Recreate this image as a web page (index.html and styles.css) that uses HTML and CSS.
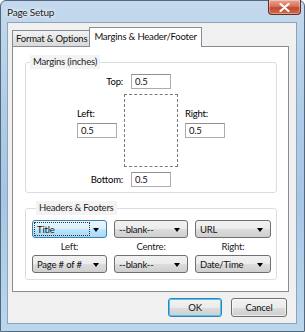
FILE: index.html
```html
<!DOCTYPE html>
<html lang="en">
<head>
    <meta charset="UTF-8">
    <title>Page Setup</title>
    <link rel="stylesheet" href="styles.css">
</head>
<body>
    <div class="window">
        <div class="titlebar">
            <span class="title">Page Setup</span>
            <button class="close" type="button">
                <svg width="11" height="9" viewBox="0 0 11 9"><path d="M1.5 1 L9.5 8 M9.5 1 L1.5 8" stroke="#fff" stroke-width="2.2" stroke-linecap="round"/></svg>
            </button>
        </div>
        <div class="client">
            <div class="tabs">
                <div class="tab">Format &amp; Options</div>
                <div class="tab active">Margins &amp; Header/Footer</div>
            </div>
            <div class="panel">
                <fieldset class="group margins">
                    <legend>Margins (inches)</legend>
                    <div class="edge-row">
                        <label class="edge-label">Top:</label>
                        <input class="field" type="text" value="0.5">
                    </div>
                    <div class="middle-row">
                        <div class="side">
                            <label>Left:</label>
                            <input class="field" type="text" value="0.5">
                        </div>
                        <div class="paper"></div>
                        <div class="side">
                            <label>Right:</label>
                            <input class="field" type="text" value="0.5">
                        </div>
                    </div>
                    <div class="edge-row">
                        <label class="edge-label">Bottom:</label>
                        <input class="field" type="text" value="0.5">
                    </div>
                </fieldset>

                <fieldset class="group headers">
                    <legend>Headers &amp; Footers</legend>
                    <div class="hf-grid">
                        <div class="combo focused"><span class="focus-rect">Title</span><i class="arrow"></i></div>
                        <div class="combo"><span>--blank--</span><i class="arrow"></i></div>
                        <div class="combo"><span>URL</span><i class="arrow"></i></div>
                        <div class="hf-label">Left:</div>
                        <div class="hf-label">Centre:</div>
                        <div class="hf-label">Right:</div>
                        <div class="combo"><span>Page # of #</span><i class="arrow"></i></div>
                        <div class="combo"><span>--blank--</span><i class="arrow"></i></div>
                        <div class="combo"><span>Date/Time</span><i class="arrow"></i></div>
                    </div>
                </fieldset>
            </div>
            <div class="actions">
                <button class="btn default" type="button">OK</button>
                <button class="btn" type="button">Cancel</button>
            </div>
        </div>
    </div>
</body>
</html>
```

FILE: styles.css
```css
* {
    box-sizing: border-box;
}

body {
    margin: 0;
    font-family: Lato, "Noto Sans", sans-serif;
    font-size: 9.5px;
    letter-spacing: -0.2px;
    color: #000;
}

.window {
    width: 305px;
    height: 332px;
    display: flex;
    flex-direction: column;
    padding: 0 7px 7px 6px;
    background: linear-gradient(180deg, #c4d9ed 0%, #b0cde8 30%, #a5c6e4 60%, #bad7ee 100%);
    border: 1px solid #54687d;
    border-radius: 6px 6px 0 0;
}

.titlebar {
    height: 21px;
    display: flex;
    align-items: center;
}

.title {
    font-size: 10px;
    color: #1a1a1a;
    text-shadow: 0 0 6px #fff, 0 0 3px #fff;
}

.close {
    margin-left: auto;
    margin-right: -4px;
    align-self: flex-start;
    margin-top: -1px;
    width: 33px;
    height: 15px;
    padding: 0;
    border: 1px solid #6b2a1e;
    border-top: none;
    border-radius: 0 0 4px 4px;
    background: linear-gradient(180deg, #e9a593 0%, #d7735c 45%, #c24a2e 55%, #d06a4c 100%);
    display: flex;
    align-items: center;
    justify-content: center;
    box-shadow: inset 0 0 0 1px rgba(255, 255, 255, 0.35);
}

.client {
    flex: 1;
    background: #f0f0f0;
    border: 1px solid #8fa3b8;
    display: flex;
    flex-direction: column;
}

.tabs {
    display: flex;
    align-items: flex-end;
    margin: 4px 0 0 4px;
    height: 19px;
    position: relative;
    z-index: 1;
}

.tab {
    height: 16px;
    padding: 0 2px 0 3px;
    line-height: 15px;
    border: 1px solid #898c95;
    border-bottom: none;
    border-right: none;
    background: linear-gradient(180deg, #f2f2f2 0%, #e6e6e6 50%, #d9d9d9 100%);
    color: #111;
}

.tab.active {
    height: 20px;
    margin-bottom: -1px;
    padding: 0 4px;
    line-height: 17px;
    background: #fff;
    border-right: 1px solid #898c95;
}

.panel {
    margin: 0 7px 0 4px;
    height: 246px;
    background: #fff;
    border: 1px solid #898c95;
    padding: 8px 11px 0 12px;
}

.group {
    margin: 0;
    border: 1px solid #d5dfe5;
    border-radius: 3px;
    padding: 0;
    min-width: 0;
}

.group legend {
    margin-left: 4px;
    padding: 0 3px;
    line-height: 14px;
    background: #f3f3f3;
    color: #1e1e1e;
}

.margins {
    padding-top: 5px;
    padding-bottom: 5px;
}

.edge-row {
    display: grid;
    grid-template-columns: 1fr 40px 1fr;
    align-items: center;
}

.edge-label {
    justify-self: end;
    margin-right: 8px;
}

.field {
    width: 40px;
    height: 15px;
    padding: 0 3px;
    border: 1px solid #abadb3;
    border-top-color: #8e8f8f;
    font: inherit;
    letter-spacing: inherit;
    color: #111;
    background: #fff;
}

.middle-row {
    display: grid;
    grid-template-columns: 40px 54px 40px;
    column-gap: 7px;
    justify-content: center;
    margin: 5px 0;
}

.side {
    display: flex;
    flex-direction: column;
    justify-content: flex-end;
    padding-bottom: 29px;
    gap: 3px;
}

.side label {
    line-height: 12px;
}

.paper {
    height: 73px;
    border: 1px dashed #7a7a7a;
}

.headers {
    margin-top: 8px;
    padding: 5px 6px 6px;
}

.hf-grid {
    display: grid;
    grid-template-columns: 75px 74px 76px;
    grid-template-rows: 18px 17px 18px;
    column-gap: 7px;
}

.hf-label {
    text-align: center;
    line-height: 17px;
    color: #222;
}

.combo {
    position: relative;
    display: flex;
    align-items: center;
    padding: 0 16px 0 4px;
    border: 1px solid #707070;
    border-radius: 3px;
    background: linear-gradient(180deg, #f2f2f2 0%, #ebebeb 50%, #dddddd 50%, #cfcfcf 100%);
    white-space: nowrap;
    color: #111;
}

.combo.focused {
    border-color: #3c7fb1;
    background: linear-gradient(180deg, #eaf6fd 0%, #d9f0fc 50%, #bee6fd 50%, #a7d9f5 100%);
    padding: 1px 16px 1px 1px;
}

.focus-rect {
    flex: 1;
    height: 100%;
    padding-left: 2px;
    line-height: 14px;
    border: 1px dotted #333;
}

.arrow {
    position: absolute;
    right: 7px;
    top: 7px;
    width: 0;
    height: 0;
    border-left: 3.5px solid transparent;
    border-right: 3.5px solid transparent;
    border-top: 4px solid #000;
}

.actions {
    display: flex;
    justify-content: flex-end;
    gap: 9px;
    padding: 6px 9px 0 0;
}

.btn {
    height: 19px;
    width: 56px;
    font: inherit;
    letter-spacing: inherit;
    color: #111;
    border: 1px solid #707070;
    border-radius: 3px;
    background: linear-gradient(180deg, #f2f2f2 0%, #ebebeb 50%, #dddddd 50%, #cfcfcf 100%);
    box-shadow: inset 0 0 0 1px rgba(255, 255, 255, 0.6);
}

.btn.default {
    width: 54px;
    border-color: #3c7fb1;
    box-shadow: inset 0 0 0 1px #48c8f8;
}
```
